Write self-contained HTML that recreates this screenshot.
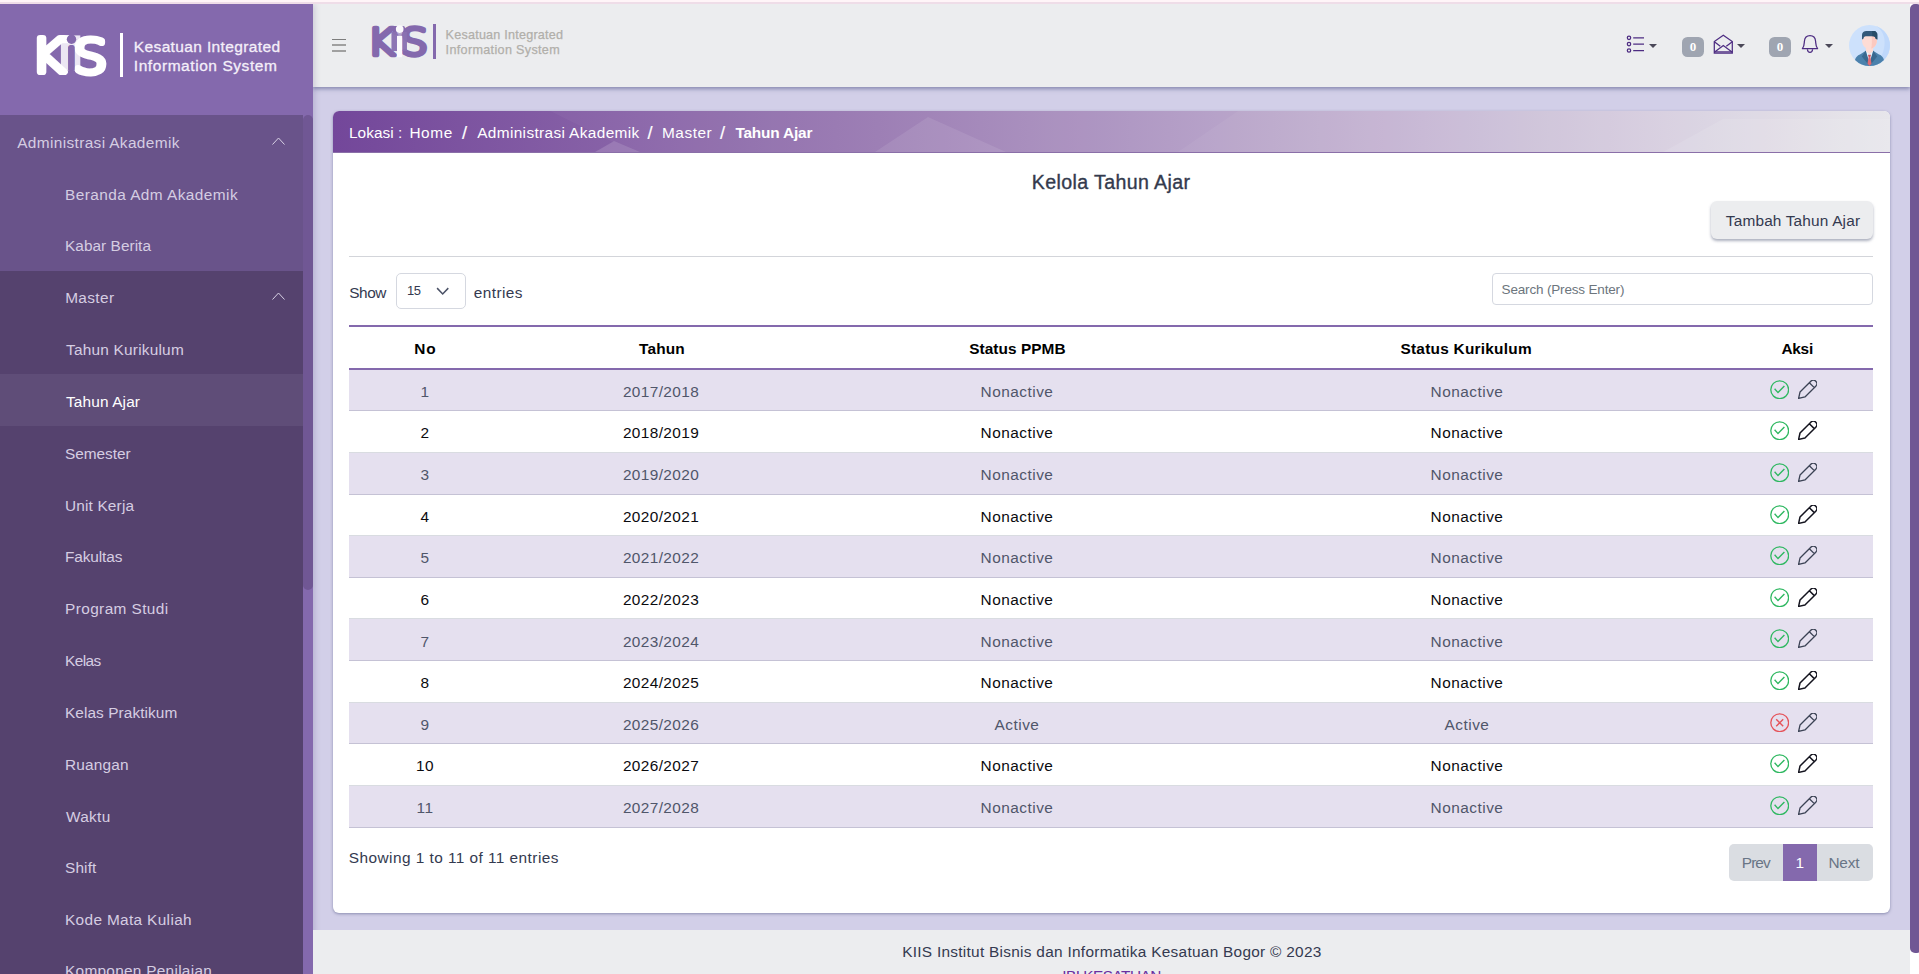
<!DOCTYPE html>
<html lang="id">
<head>
<meta charset="utf-8">
<title>Kelola Tahun Ajar - KIIS</title>
<style>
*{box-sizing:border-box;margin:0;padding:0}
html,body{width:1919px;height:974px;overflow:hidden}
body{position:relative;background:#d2cfe8;font-family:"Liberation Sans",sans-serif;font-size:16px;color:#212529}
.abs{position:absolute}
#topstrip1{left:0;top:0;width:1919px;height:2px;background:#fff5f8;z-index:5}
#topstrip2{left:0;top:2px;width:1919px;height:2px;background:#efdde8;z-index:5}
/* page scrollbar */
#pscroll{left:1910px;top:4px;width:9px;height:970px;background:#fff}
#pscroll i{position:absolute;left:0;top:0;width:12px;height:949px;background:#705794;border-radius:5px}
/* sidebar */
#sidebar{left:0;top:4px;width:313px;height:970px;background:#8469ad;box-shadow:2px 0 6px rgba(60,50,110,.18)}
#sbhead{left:0;top:0;width:313px;height:111px}
#menu{left:0;top:111px;width:303px;height:859px;overflow:hidden;background:#69538a}
#sbthumb{left:303px;top:111px;width:10px;height:475px;background:#705794;border-radius:5px}
.mi{position:relative;height:51.8px;line-height:51.8px;font-size:15.4px;letter-spacing:.4px;color:#d5cde2;white-space:nowrap}
.mi span{position:absolute;left:65px;top:1.6px;display:inline-block}
.mi.l1 span{left:16px}
.l2{background:linear-gradient(#69538a 0.7px,#55426e 0.7px)}
.mi.act{background:#5f4d78;color:#fff}
.chev{position:absolute;left:272px;top:22px;width:13px;height:8px}
/* topbar */
#topbar{left:313px;top:4px;width:1597px;height:83px;background:#ecedef;box-shadow:0 1.5px 4px rgba(85,90,140,.6)}
/* card */
#card{left:333px;top:111px;width:1557px;height:801.8px;background:#fff;border-radius:6px;box-shadow:0 1px 3px rgba(80,85,130,.55);overflow:hidden}
#crumb{left:0;top:0;width:1557px;height:42px;background:linear-gradient(90deg,#73479a 0%,#9a7bb3 35%,#c5b5d3 70%,#e6e5ea 100%);border-bottom:1px solid #8a6fa8;color:#fff;font-size:15.4px;letter-spacing:.4px;line-height:41px;white-space:nowrap}
/* footer */
#footer{left:313px;top:929.7px;width:1597px;height:44.3px;background:#ecedef}

#crumb span{position:absolute;top:0.5px}
#crumb b{position:absolute;top:0.5px;font-weight:700}
#title{left:0;top:56px;width:1557px;text-align:center;font-size:19.6px;letter-spacing:.4px;line-height:30px;color:#333a4d;font-weight:400;-webkit-text-stroke:0.35px #333a4d;white-space:nowrap}
#addbtn{left:1378px;top:90.2px;width:162px;height:38.3px;background:#ecedef;border-radius:6px;box-shadow:0 2px 3px rgba(70,80,110,.45);text-align:center;line-height:38px;font-size:15.4px;letter-spacing:.4px;color:#343a50;white-space:nowrap}
#hr{left:16px;top:145px;width:1524px;height:1px;background:#d3d5da}
.lbl{font-size:15.4px;letter-spacing:.4px;color:#343a50;line-height:24px;white-space:nowrap}
#show{left:16px;top:169.5px}
#entries{left:141px;top:169.5px}
#sel{left:63.3px;top:162px;width:69.3px;height:36px;border:1px solid #d5d8e0;border-radius:5px;background:#fff}
#sel span{position:absolute;left:9px;top:0;line-height:34px;font-size:13px;color:#343a50}
#sel svg{position:absolute;left:39px;top:13.4px;width:13.4px;height:8.4px}
#search{left:1159px;top:162px;width:381px;height:32px;border:1px solid #d5d8e0;border-radius:4px;background:#fff}
#search span{position:absolute;left:9px;top:0;line-height:31px;font-size:13.5px;color:#6c757d;white-space:nowrap}
#tbl{left:16px;top:214px;width:1524px}
.tr{position:relative;height:42px;border-bottom:1px solid #d9dce1;font-size:15.4px;letter-spacing:.4px;line-height:44.6px;color:#0b0b0f;white-space:nowrap}
.tr.odd{background:#e5e0ef;color:#50566a;border-bottom-color:#c5c2d5}
.tr.hd{height:45px;border-top:2px solid #8469ad;border-bottom:2px solid #8469ad;font-weight:700;line-height:44px;color:#000}
.tr>div{position:absolute;top:0;height:100%;text-align:center}
.c1{left:0;width:152px}.c2{left:152px;width:320px}.c3{left:472px;width:390px}.c4{left:862px;width:510px}.c5{left:1372px;width:152px}
.ic{position:absolute;top:9.6px;width:19.4px;height:19.4px}
.ic.a{left:1420.7px}.ic.b{left:1448.9px}
#showing{left:16px;top:734.9px}
#pager{left:1396px;top:733px;width:144px;height:37px;border-radius:5px;overflow:hidden;background:#dadde2;font-size:15.4px;letter-spacing:.4px;line-height:37px;color:#697586;white-space:nowrap}
#pager div{position:absolute;top:0;height:37px;text-align:center}
#pager .p{left:0;width:54px}
#pager .n{left:54px;width:34px;background:#8469ad;color:#fff}
#pager .x{left:88px;width:56px}
#ftxt{left:0;top:10px;width:1597px;text-align:center;font-size:15.4px;letter-spacing:.4px;line-height:24px;color:#343a50;white-space:nowrap}
#ftxt2{left:0;top:34.1px;width:1597px;text-align:center;font-size:15.4px;letter-spacing:.4px;line-height:24px;color:#6a2fa0;white-space:nowrap}
#footer{overflow:hidden}

.lt{font-family:"Liberation Sans",sans-serif;font-weight:700}
#sblogo{left:0;top:0;width:120px;height:90px}
.lg{font-family:"DejaVu Sans",sans-serif;font-weight:200;stroke-linejoin:round;stroke-linecap:round}
#sbbar{left:119.5px;top:28.5px;width:3px;height:44.5px;background:#fff}
#sbtxt{left:134px;top:32.3px;font-size:15.5px;line-height:19.6px;color:#f4eff9;white-space:nowrap;-webkit-text-stroke:0.3px #f4eff9}
#burger{left:19px;top:34.9px;width:14px;height:13px}
#burger i{position:absolute;left:0;width:14px;height:1.1px;background:#7d7d7d}
#tblogo{left:0;top:0;width:130px;height:70px}
#tbbar{left:120.1px;top:19.9px;width:2.9px;height:35px;background:#8469ad}
#tbtxt{left:132px;top:23.5px;font-size:12.6px;line-height:15.5px;color:#b1afaa;white-space:nowrap;-webkit-text-stroke:0.25px #b1afaa}
.badge{top:33px;width:22px;height:20px;border-radius:5.5px;background:#9fa5b1;color:#fff;font-family:"Liberation Serif",serif;font-weight:700;font-size:13px;line-height:20px;text-align:center}
.caret{top:39.8px;width:0;height:0;border-left:4.2px solid transparent;border-right:4.2px solid transparent;border-top:4.4px solid #4a4858}
.tr span,#pager span,#addbtn span{position:relative;left:0}
.tr:not(.hd) .c2{letter-spacing:.38px}.tr:not(.hd) .c3,.tr:not(.hd) .c4{letter-spacing:.48px}
#addbtn span{top:.8px}
#sbtxt span,#tbtxt span{position:absolute}
.tr.first{height:41px}
#crumb #b2,#crumb #b4,#crumb #b6{top:2px;font-size:18.2px;letter-spacing:0;-webkit-text-stroke:.2px #fff}
.tr.dn>div{top:1px}.tr.up>div{top:-1px}
.tr:not(.hd) .c3{padding-left:2px}.tr:not(.hd) .c4{padding-left:2px}
</style>
</head>
<body>
<div class="abs" id="topstrip1"></div><div class="abs" id="topstrip2"></div>

<div class="abs" id="topbar">
  <div class="abs" id="burger"><i style="top:0"></i><i style="top:5.3px;height:1.6px;background:#a0a0a0"></i><i style="top:11.1px;height:1.6px;background:#a0a0a0"></i></div>
  <svg class="abs" id="tblogo" viewBox="0 0 130 70">
    <rect x="78.6" y="28" width="15.3" height="19" fill="#8d75b4"/>
    <rect x="80" y="22" width="12" height="9" rx="2" fill="#8469ad"/>
    <text class="lg" font-size="36.9" fill="#8469ad" stroke="#8469ad" stroke-width="4.6" transform="translate(54.6,50.6) scale(1.125,1)">K</text>
    <text class="lg" font-size="32" fill="#fbf9fd" stroke="#fbf9fd" stroke-width="3.4" transform="translate(82.6,51.4)">i</text>
    <text class="lg" font-size="36.5" fill="#8469ad" stroke="#8469ad" stroke-width="4.6" transform="translate(87.9,50.9) scale(1.155,1)">S</text>
    <rect x="78.6" y="28" width="15.3" height="19" fill="#8d75b4" opacity=".6"/>
    <rect x="84" y="31.9" width="5.1" height="21.3" fill="#fbf9fd"/>
    <circle cx="86.7" cy="25.1" r="3.85" fill="#fbf9fd"/>
  </svg>
  <div class="abs" id="tbbar"></div>
  <div class="abs" id="tbtxt"><span id="tbt1" style="left:0.6px;top:0;letter-spacing:0.22px">Kesatuan Integrated</span><span id="tbt2" style="left:0.6px;top:15.7px;letter-spacing:0.33px">Information System</span></div>

  <svg class="abs" style="left:1312px;top:30px" width="20" height="20" viewBox="0 0 20 20"><g fill="none" stroke="#4d2c82" stroke-width="1.25"><circle cx="4" cy="3.8" r="1.7"/><circle cx="4" cy="10.1" r="1.7"/><circle cx="4" cy="16.5" r="1.7"/><path d="M8.2 3.8H19M8.2 10.1H19M8.2 16.5H19"/></g></svg>
  <div class="abs caret" style="left:1336px"></div>
  <div class="abs badge" style="left:1369px">0</div>
  <svg class="abs" style="left:1399px;top:29px" width="22" height="22" viewBox="0 0 22 22"><g fill="none" stroke="#4d2c82" stroke-width="1.25" stroke-linejoin="miter"><path d="M2.3 20.2V8.6L11.3 2.3L20.3 8.6V20.2Z"/><path d="M2.3 19.2L11.3 12.6L20.3 19.2"/><path d="M2.3 8.8L8.3 13.3M20.3 8.8L14.3 13.3"/><path d="M2.3 18.9H20.3"/></g></svg>
  <div class="abs caret" style="left:1424px"></div>
  <div class="abs badge" style="left:1456px">0</div>
  <svg class="abs" style="left:1487px;top:29px" width="20" height="22" viewBox="0 0 20 22"><g fill="none" stroke="#4d2c82" stroke-width="1.25" stroke-linejoin="round"><path d="M2.4 15.7C4.4 13.2 4.2 10.6 4.4 8.2C4.7 4.6 7 2.7 10 2.7C13 2.7 15.3 4.6 15.6 8.2C15.8 10.6 15.6 13.2 17.6 15.7Z"/><path d="M7.4 16.2C7.6 18.4 8.6 19.4 10 19.4C11.4 19.4 12.4 18.4 12.6 16.2"/></g></svg>
  <div class="abs caret" style="left:1512px"></div>
  <svg class="abs" style="left:1536px;top:21px" width="41" height="41" viewBox="0 0 41 41">
    <defs><clipPath id="avc"><circle cx="20.5" cy="20.5" r="20.5"/></clipPath></defs>
    <g clip-path="url(#avc)">
      <rect width="41" height="41" fill="#cde1fc"/>
      <path d="M26 0C33 4 36.5 12 35.5 20C34.5 30 30 37 22 41H41V0Z" fill="#bfd8fb"/>
      <path d="M5.5 41C5.5 34 7 31 11 29.6L16.9 25.8H24.1L30 29.6C34 31 35.5 34 35.5 41Z" fill="#4b81ac"/>
      <path d="M16.9 25.4L12.8 31.4L20.5 41L28.2 31.4L24.1 25.4L20.5 37Z" fill="#396990"/>
      <path d="M16.7 25.2L20.5 37.8L24.3 25.2Z" fill="#eaf5fd"/>
      <path d="M16.9 20H24.1V26.2L20.5 29.3L16.9 26.2Z" fill="#fddcd5"/>
      <path d="M18.9 29.7H22.1L21.4 32.1H19.6Z" fill="#d4545f"/>
      <path d="M19.6 32.1H21.4L22.5 38.8L20.5 41L18.5 38.8Z" fill="#de6b74"/>
      <path d="M13.1 11H27.8V16C27.8 20 25 23.8 20.5 23.8C16 23.8 13.1 20 13.1 16Z" fill="#fddcd5"/>
      <path d="M22.6 11H27.8V16C27.8 19.6 25.6 22.8 22.2 23.6C23 20 23 15 22.6 11Z" fill="#fcc9c0"/>
      <path d="M13 14.4V10C13 7.4 15 5.9 17.4 5.9H25C26.4 5.9 27 6.5 27.2 7.2C28.2 7.6 28.3 8.6 28.3 10V14.4L26.7 13.8C26.5 12 25.7 11.2 24.3 11.2H16.8C15.4 11.2 14.6 12 14.4 13.8Z" fill="#33597a"/>
      <path d="M23 5.9H25C26.4 5.9 27 6.5 27.2 7.2C28.2 7.6 28.3 8.6 28.3 10V14.4L26.7 13.8C26.5 12 25.7 11.2 24.3 11.2H23.4Z" fill="#274c68"/>
    </g>
  </svg>
</div>

<div class="abs" id="sidebar">
  <div class="abs" id="sbhead">
    <svg class="abs" id="sblogo" viewBox="0 0 120 90">
      <rect x="60.9" y="31.4" width="19.4" height="35.1" fill="#ebe6f3"/>
      <rect x="62" y="31.2" width="9" height="8" fill="#fff"/>
      <text class="lg" font-size="45.4" fill="#fff" stroke="#fff" stroke-width="6.2" transform="translate(31.5,68) scale(1.125,1)">K</text>
      <text class="lg" font-size="40" fill="#8469ad" stroke="#8469ad" stroke-width="4.2" transform="translate(65.9,65)">i</text>
      <text class="lg" font-size="46" fill="#fff" stroke="#fff" stroke-width="6.2" transform="translate(73.5,68.6) scale(1.15,1)">S</text>
      <rect x="68.1" y="42.6" width="6.5" height="24" fill="#8469ad"/>
      <circle cx="71.5" cy="35.3" r="4.7" fill="#8469ad"/>
    </svg>
    <div class="abs" id="sbbar"></div>
    <div class="abs" id="sbtxt"><span id="sbt1" style="left:-0.2px;top:0.4px;letter-spacing:0.37px">Kesatuan Integrated</span><span id="sbt2" style="left:-0.2px;top:19.5px;letter-spacing:0.56px">Information System</span></div>
  </div>
  <div class="abs" id="menu">
    <div class="mi l1"><span id="s0" style="letter-spacing:0.37px;left:17.2px">Administrasi Akademik</span><svg class="chev" viewBox="0 0 13 8"><path d="M0.5 7.5 L6.5 1 L12.5 7.5" fill="none" stroke="#d9d2e6" stroke-width="1"/></svg></div>
    <div class="mi"><span id="s1" style="top:2.6px;letter-spacing:0.44px;left:65.0px">Beranda Adm Akademik</span></div>
    <div class="mi"><span id="s2" style="letter-spacing:0.04px;left:65.0px">Kabar Berita</span></div>
    <div class="l2">
      <div class="mi"><span id="s3" style="letter-spacing:0.36px;left:65.2px">Master</span><svg class="chev" viewBox="0 0 13 8"><path d="M0.5 7.5 L6.5 1 L12.5 7.5" fill="none" stroke="#d9d2e6" stroke-width="1"/></svg></div>
      <div class="mi"><span id="s4" style="letter-spacing:0.22px;left:66.0px">Tahun Kurikulum</span></div>
      <div class="mi act"><span id="s5" style="letter-spacing:0.14px;left:66.0px">Tahun Ajar</span></div>
      <div class="mi"><span id="s6" style="top:2.6px;letter-spacing:-0.05px;left:65.0px">Semester</span></div>
      <div class="mi"><span id="s7" style="top:2.6px;letter-spacing:0.16px;left:65.0px">Unit Kerja</span></div>
      <div class="mi"><span id="s8" style="letter-spacing:-0.11px;left:65.0px">Fakultas</span></div>
      <div class="mi"><span id="s9" style="letter-spacing:0.40px;left:65.0px">Program Studi</span></div>
      <div class="mi"><span id="s10" style="letter-spacing:-0.56px;left:65.0px">Kelas</span></div>
      <div class="mi"><span id="s11" style="top:2.6px;letter-spacing:0.08px;left:65.0px">Kelas Praktikum</span></div>
      <div class="mi"><span id="s12" style="top:2.6px;letter-spacing:0.17px;left:65.0px">Ruangan</span></div>
      <div class="mi"><span id="s13" style="top:2.6px;letter-spacing:0.30px;left:66.0px">Waktu</span></div>
      <div class="mi"><span id="s14" style="letter-spacing:0.15px;left:65.0px">Shift</span></div>
      <div class="mi"><span id="s15" style="letter-spacing:0.34px;left:65.0px">Kode Mata Kuliah</span></div>
      <div class="mi"><span id="s16" style="letter-spacing:0.28px;left:65.0px">Komponen Penilaian</span></div>
    </div>
  </div>
  <div class="abs" id="sbthumb"></div>
</div>

<div class="abs" id="card">
  <div class="abs" id="crumb">
    <svg class="abs" style="left:0;top:0" width="1557" height="41" viewBox="0 0 1557 41"><polygon points="217,0 280,31 262,41 1557,41 1557,0" fill="#fff" opacity=".035"/><polygon points="262,41 281,30 307,41" fill="#fff" opacity=".13"/><polygon points="542,41 595,6 673,41" fill="#fff" opacity=".09"/><polygon points="845,41 905,0 1557,0 1557,41" fill="#fff" opacity=".05"/><polygon points="1330,41 1390,8 1557,8 1557,41" fill="#fff" opacity=".10"/></svg>
    <span id="b0" style="left:16.0px;letter-spacing:0.03px">Lokasi :</span><span id="b1" style="left:76.4px;letter-spacing:0.60px">Home</span><span id="b2" style="left:129.0px;letter-spacing:0.40px">/</span><span id="b3" style="left:144.2px;letter-spacing:0.36px">Administrasi Akademik</span><span id="b4" style="left:314.6px;letter-spacing:0.40px">/</span><span id="b5" style="left:329.0px;letter-spacing:0.52px">Master</span><span id="b6" style="left:386.9px;letter-spacing:0.40px">/</span><b id="b7" style="left:402.4px;letter-spacing:-0.18px">Tahun Ajar</b>
  </div>
  <div class="abs" id="title" style="letter-spacing:0.38px;left:-0.4px">Kelola Tahun Ajar</div>
  <div class="abs" id="addbtn"><span id="btnt" style="letter-spacing:0.17px;left:1.0px">Tambah Tahun Ajar</span></div>
  <div class="abs" id="hr"></div>
  <div class="abs lbl" id="show" style="letter-spacing:-0.40px;left:16.2px">Show</div>
  <div class="abs" id="sel"><span id="selv" style="letter-spacing:-0.60px;left:9.8px">15</span><svg viewBox="0 0 14 9"><path d="M1 1.2 L7 7.4 L13 1.2" fill="none" stroke="#4a5166" stroke-width="1.6"/></svg></div>
  <div class="abs lbl" id="entries" style="letter-spacing:0.40px;left:140.8px">entries</div>
  <div class="abs" id="search"><span id="srch" style="letter-spacing:-0.17px;left:8.6px">Search (Press Enter)</span></div>
  <div class="abs" id="tbl">
    <div class="tr hd"><div class="c1"><span id="h0" style="letter-spacing:0.8px;left:0.3px">No</span></div><div class="c2"><span id="h1" style="letter-spacing:0.15px;left:1.0px">Tahun</span></div><div class="c3"><span id="h2" style="letter-spacing:0.06px;left:1.4px">Status PPMB</span></div><div class="c4"><span id="h3" style="letter-spacing:0.25px;left:0.2px">Status Kurikulum</span></div><div class="c5"><span id="h4" style="letter-spacing:-0.26px;left:0.2px">Aksi</span></div></div>
    <div class="tr odd" style="height:41px"><div class="c1">1</div><div class="c2">2017/2018</div><div class="c3">Nonactive</div><div class="c4">Nonactive</div><svg class="ic a" viewBox="0 0 19.4 19.4"><circle cx="9.7" cy="9.7" r="8.9" fill="none" stroke="#2fb861" stroke-width="1.3"/><path d="M4.6 8.8L8 12.6L14.4 5.9" fill="none" stroke="#2fb861" stroke-width="1.4"/></svg><svg class="ic b" viewBox="0 0 19.4 19.4"><path d="M0.6 18.4L2.01 12.04L12.83 1.22A3.5 3.5 0 0 1 17.78 6.17L6.96 16.99ZM11.35 2.7L16.3 7.65" fill="none" stroke="#3b4254" stroke-width="1.3" stroke-linejoin="round"/></svg></div>
    <div class="tr" style="height:42px"><div class="c1">2</div><div class="c2">2018/2019</div><div class="c3">Nonactive</div><div class="c4">Nonactive</div><svg class="ic a" viewBox="0 0 19.4 19.4"><circle cx="9.7" cy="9.7" r="8.9" fill="none" stroke="#2fb861" stroke-width="1.3"/><path d="M4.6 8.8L8 12.6L14.4 5.9" fill="none" stroke="#2fb861" stroke-width="1.4"/></svg><svg class="ic b" viewBox="0 0 19.4 19.4"><path d="M0.6 18.4L2.01 12.04L12.83 1.22A3.5 3.5 0 0 1 17.78 6.17L6.96 16.99ZM11.35 2.7L16.3 7.65" fill="none" stroke="#14141f" stroke-width="1.5" stroke-linejoin="round"/></svg></div>
    <div class="tr odd" style="height:42px"><div class="c1">3</div><div class="c2">2019/2020</div><div class="c3">Nonactive</div><div class="c4">Nonactive</div><svg class="ic a" viewBox="0 0 19.4 19.4"><circle cx="9.7" cy="9.7" r="8.9" fill="none" stroke="#2fb861" stroke-width="1.3"/><path d="M4.6 8.8L8 12.6L14.4 5.9" fill="none" stroke="#2fb861" stroke-width="1.4"/></svg><svg class="ic b" viewBox="0 0 19.4 19.4"><path d="M0.6 18.4L2.01 12.04L12.83 1.22A3.5 3.5 0 0 1 17.78 6.17L6.96 16.99ZM11.35 2.7L16.3 7.65" fill="none" stroke="#3b4254" stroke-width="1.3" stroke-linejoin="round"/></svg></div>
    <div class="tr" style="height:41px"><div class="c1">4</div><div class="c2">2020/2021</div><div class="c3">Nonactive</div><div class="c4">Nonactive</div><svg class="ic a" viewBox="0 0 19.4 19.4"><circle cx="9.7" cy="9.7" r="8.9" fill="none" stroke="#2fb861" stroke-width="1.3"/><path d="M4.6 8.8L8 12.6L14.4 5.9" fill="none" stroke="#2fb861" stroke-width="1.4"/></svg><svg class="ic b" viewBox="0 0 19.4 19.4"><path d="M0.6 18.4L2.01 12.04L12.83 1.22A3.5 3.5 0 0 1 17.78 6.17L6.96 16.99ZM11.35 2.7L16.3 7.65" fill="none" stroke="#14141f" stroke-width="1.5" stroke-linejoin="round"/></svg></div>
    <div class="tr odd" style="height:42px"><div class="c1">5</div><div class="c2">2021/2022</div><div class="c3">Nonactive</div><div class="c4">Nonactive</div><svg class="ic a" viewBox="0 0 19.4 19.4"><circle cx="9.7" cy="9.7" r="8.9" fill="none" stroke="#2fb861" stroke-width="1.3"/><path d="M4.6 8.8L8 12.6L14.4 5.9" fill="none" stroke="#2fb861" stroke-width="1.4"/></svg><svg class="ic b" viewBox="0 0 19.4 19.4"><path d="M0.6 18.4L2.01 12.04L12.83 1.22A3.5 3.5 0 0 1 17.78 6.17L6.96 16.99ZM11.35 2.7L16.3 7.65" fill="none" stroke="#3b4254" stroke-width="1.3" stroke-linejoin="round"/></svg></div>
    <div class="tr" style="height:41px"><div class="c1">6</div><div class="c2">2022/2023</div><div class="c3">Nonactive</div><div class="c4">Nonactive</div><svg class="ic a" viewBox="0 0 19.4 19.4"><circle cx="9.7" cy="9.7" r="8.9" fill="none" stroke="#2fb861" stroke-width="1.3"/><path d="M4.6 8.8L8 12.6L14.4 5.9" fill="none" stroke="#2fb861" stroke-width="1.4"/></svg><svg class="ic b" viewBox="0 0 19.4 19.4"><path d="M0.6 18.4L2.01 12.04L12.83 1.22A3.5 3.5 0 0 1 17.78 6.17L6.96 16.99ZM11.35 2.7L16.3 7.65" fill="none" stroke="#14141f" stroke-width="1.5" stroke-linejoin="round"/></svg></div>
    <div class="tr odd dn" style="height:42px"><div class="c1">7</div><div class="c2">2023/2024</div><div class="c3">Nonactive</div><div class="c4">Nonactive</div><svg class="ic a" viewBox="0 0 19.4 19.4"><circle cx="9.7" cy="9.7" r="8.9" fill="none" stroke="#2fb861" stroke-width="1.3"/><path d="M4.6 8.8L8 12.6L14.4 5.9" fill="none" stroke="#2fb861" stroke-width="1.4"/></svg><svg class="ic b" viewBox="0 0 19.4 19.4"><path d="M0.6 18.4L2.01 12.04L12.83 1.22A3.5 3.5 0 0 1 17.78 6.17L6.96 16.99ZM11.35 2.7L16.3 7.65" fill="none" stroke="#3b4254" stroke-width="1.3" stroke-linejoin="round"/></svg></div>
    <div class="tr" style="height:42px"><div class="c1">8</div><div class="c2">2024/2025</div><div class="c3">Nonactive</div><div class="c4">Nonactive</div><svg class="ic a" viewBox="0 0 19.4 19.4"><circle cx="9.7" cy="9.7" r="8.9" fill="none" stroke="#2fb861" stroke-width="1.3"/><path d="M4.6 8.8L8 12.6L14.4 5.9" fill="none" stroke="#2fb861" stroke-width="1.4"/></svg><svg class="ic b" viewBox="0 0 19.4 19.4"><path d="M0.6 18.4L2.01 12.04L12.83 1.22A3.5 3.5 0 0 1 17.78 6.17L6.96 16.99ZM11.35 2.7L16.3 7.65" fill="none" stroke="#14141f" stroke-width="1.5" stroke-linejoin="round"/></svg></div>
    <div class="tr odd" style="height:41px"><div class="c1">9</div><div class="c2">2025/2026</div><div class="c3">Active</div><div class="c4">Active</div><svg class="ic a" viewBox="0 0 19.4 19.4"><circle cx="9.7" cy="9.7" r="8.9" fill="none" stroke="#e5535a" stroke-width="1.3"/><path d="M6.2 6.2L13.2 13.2M13.2 6.2L6.2 13.2" fill="none" stroke="#e5535a" stroke-width="1.4"/></svg><svg class="ic b" viewBox="0 0 19.4 19.4"><path d="M0.6 18.4L2.01 12.04L12.83 1.22A3.5 3.5 0 0 1 17.78 6.17L6.96 16.99ZM11.35 2.7L16.3 7.65" fill="none" stroke="#3b4254" stroke-width="1.3" stroke-linejoin="round"/></svg></div>
    <div class="tr" style="height:42px"><div class="c1">10</div><div class="c2">2026/2027</div><div class="c3">Nonactive</div><div class="c4">Nonactive</div><svg class="ic a" viewBox="0 0 19.4 19.4"><circle cx="9.7" cy="9.7" r="8.9" fill="none" stroke="#2fb861" stroke-width="1.3"/><path d="M4.6 8.8L8 12.6L14.4 5.9" fill="none" stroke="#2fb861" stroke-width="1.4"/></svg><svg class="ic b" viewBox="0 0 19.4 19.4"><path d="M0.6 18.4L2.01 12.04L12.83 1.22A3.5 3.5 0 0 1 17.78 6.17L6.96 16.99ZM11.35 2.7L16.3 7.65" fill="none" stroke="#14141f" stroke-width="1.5" stroke-linejoin="round"/></svg></div>
    <div class="tr odd" style="height:42px"><div class="c1">11</div><div class="c2">2027/2028</div><div class="c3">Nonactive</div><div class="c4">Nonactive</div><svg class="ic a" viewBox="0 0 19.4 19.4"><circle cx="9.7" cy="9.7" r="8.9" fill="none" stroke="#2fb861" stroke-width="1.3"/><path d="M4.6 8.8L8 12.6L14.4 5.9" fill="none" stroke="#2fb861" stroke-width="1.4"/></svg><svg class="ic b" viewBox="0 0 19.4 19.4"><path d="M0.6 18.4L2.01 12.04L12.83 1.22A3.5 3.5 0 0 1 17.78 6.17L6.96 16.99ZM11.35 2.7L16.3 7.65" fill="none" stroke="#3b4254" stroke-width="1.3" stroke-linejoin="round"/></svg></div>
  </div>
  <div class="abs lbl" id="showing" style="letter-spacing:0.45px;left:15.8px">Showing 1 to 11 of 11 entries</div>
  <div class="abs" id="pager"><div class="p"><span id="p0" style="letter-spacing:-0.93px;left:-0.2px">Prev</span></div><div class="n"><span id="p1">1</span></div><div class="x"><span id="p2" style="letter-spacing:-0.20px;left:-1.2px">Next</span></div></div>
</div>

<div class="abs" id="footer"><div class="abs" id="ftxt" style="letter-spacing:0.28px;left:0.4px">KIIS Institut Bisnis dan Informatika Kesatuan Bogor © 2023</div><div class="abs" id="ftxt2" style="letter-spacing:-0.52px">IBI KESATUAN</div></div>

<div class="abs" id="pscroll"><i></i></div>
</body>
</html>
